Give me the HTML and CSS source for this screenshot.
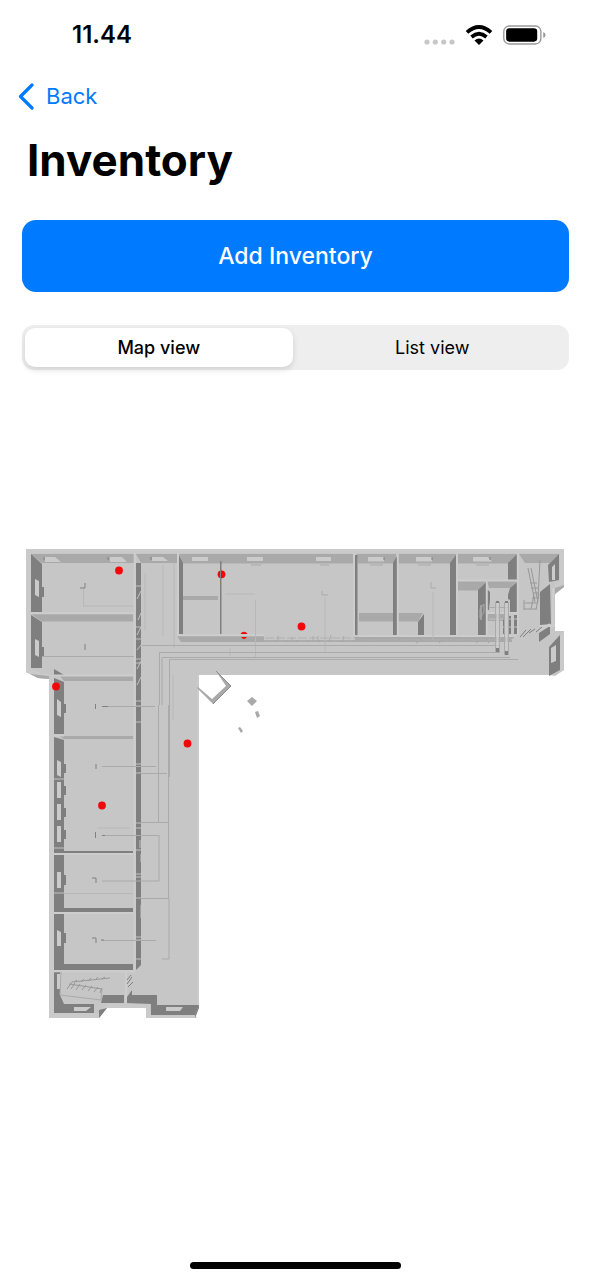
FILE: index.html
```html
<!DOCTYPE html>
<html lang="en">
<head>
<meta charset="utf-8">
<meta name="viewport" content="width=device-width, initial-scale=1">
<title>Inventory</title>
<link rel="stylesheet" href="styles.css">
</head>
<body>
<div class="screen">
  <header class="status">
    <time class="clock">11.44</time>
    <div class="indicators">
      <svg class="signal" viewBox="0 0 31 6" aria-hidden="true"><circle cx="3" cy="3" r="2.6"/><circle cx="11.3" cy="3" r="2.6"/><circle cx="19.7" cy="3" r="2.6"/><circle cx="28" cy="3" r="2.6"/></svg>
      <svg class="wifi" viewBox="0 0 28 20" aria-hidden="true">
        <path d="M2 7.4Q14-3.2 26 7.4M6.5 12Q14 5.6 21.5 12" fill="none" stroke="#000" stroke-width="3.8"/>
        <path d="M9.5 15.4Q14 11.7 18.5 15.4L14 20Z"/>
      </svg>
      <svg class="battery" viewBox="0 0 44 20" aria-hidden="true">
        <rect x=".8" y=".8" width="38" height="18.4" rx="5.6" fill="none" stroke="#999" stroke-width="1.4"/>
        <rect x="3.2" y="3.2" width="31.8" height="13.6" rx="3.4"/>
        <path d="M41.2 7Q43.6 8 43.6 10T41.2 13Z" fill="#999"/>
      </svg>
    </div>
  </header>
  <nav class="nav">
    <a class="back" href="#">
      <svg class="chevron" viewBox="0 0 16 27" aria-hidden="true"><path d="M14 2 2.5 13.5 14 25" fill="none" stroke="currentColor" stroke-width="3.2" stroke-linecap="round" stroke-linejoin="round"/></svg>
      <span>Back</span>
    </a>
  </nav>
  <main class="content">
    <h1 class="title">Inventory</h1>
    <button class="add" type="button">Add Inventory</button>
    <div class="segments" role="radiogroup" aria-label="View">
      <label class="segment"><input class="choice" type="radio" name="view" checked><span class="segment-text">Map view</span></label>
      <label class="segment"><input class="choice" type="radio" name="view"><span class="segment-text">List view</span></label>
    </div>
    <svg class="map" viewBox="22 540 547 486" role="img" aria-label="Floor plan with inventory locations">
      <path class="floor" d="M26 549H564V587L555 594V631H564V670L555 676 549 675H199V1007L195 1018H146V1008H107L99 1018H49V679L38 678 26 672Z"/>
      <!-- outer wall tops -->
      <path class="rim" d="M26 549H564V553H31V668L42 674H49V679L38 678 26 672ZM49 675H54V1013H99L107 1004H150V1013H194L197 1018H146V1008H107L99 1018H49ZM560 553H564V587L555 588V584L560 580ZM560 635 564 631V670L560 672ZM197 675H199V1006L197 1006Z"/>
      <!-- far wall faces and horizontal partitions -->
      <g class="face">
        <path d="M31 554H134V563H42ZM136 554H178V563H141ZM179 554H353V563.5H183ZM357 554H396V563.5H358ZM398 554H456V563.5H398ZM457 554H517L508 563.5H457ZM519 554H559L550 563H525Z"/>
        <path d="M31 614H133V621.5H42ZM182 596H218V600H183ZM177 636H264V642H181ZM264 640H512V642H264ZM355 637H515L508 642H355ZM359 613H396V621.5H359ZM398 613H423L418 621.5H398ZM457 581H486L478 590.5H457ZM487 581H517L510 588H489ZM487 614H505V621H487Z"/>
        <path d="M60 676H133V681H64ZM59 736H133V739H64Z"/>
        <path d="M555 588 564 585V587L555 594ZM30 674 49 676V679L38 678Z"/>
      </g>
      <!-- shaded side faces -->
      <g class="shade">
        <path d="M31 554 42 564V612H31ZM31 615 42 622V668H31ZM136 563H141V965L136 970ZM179 555 183 563V634H179ZM220 561H221.5V634H220ZM355 555H357.5V635H355ZM393 563 397 556V635H393ZM418 622 424 614V635H418ZM450 563 456 555V635H450ZM478 590 486 582V635H478ZM508 563 517 554V580H508ZM510 588 517 582V612H510V600L508 599V595ZM487 589 490 592V600L489 610H487Z"/>
        <path d="M548 565 559 554V580L549 582ZM540 592 550 584 551 624 540 625ZM539 633 550 626V634L539 642ZM549 647 560 635V670L549 676Z"/>
        <path d="M54 669 64 675H54ZM54 678 64 682V734H54ZM54 737 64 740V851H133V853H54ZM54 855H64V908H133V912H54ZM54 914H64V964H133V970H54ZM54 972H60V995L64 1004H94V1013H54ZM103 995H124V1003H101ZM127 1003V997L132 990V995H157V1005H199L195 1015H151V1004Z"/>
        <path d="M195 1015 199 1005V1008L195 1018ZM99 1018V1010L107 1008ZM42 587H44V597H42ZM42 647H44V657H42ZM64 704H66V713H64ZM64 764H66V773H64ZM64 786H66V795H64ZM64 808H66V817H64ZM64 830H66V839H64ZM64 875H66V885H64ZM64 933H66V943H64Z"/>
      </g>
      <!-- wall crests -->
      <path class="crest" d="M134.7 553V970M178 553V635M354 553V636M397.8 554V636M457 554V636M517.8 553V635M486.8 582V635M54 735.5H64M54 853.9H133M54 913H133M54 971.2H135M126 971V1004M31 613.2H134M458 580.5H517M487 613H517M54 675.5H134M177 635.3H264M358 636H516M540 626H553V588M539 631 550 624"/>
      <!-- windows -->
      <path class="pane" d="M45 557H55L61 562H45ZM110 557H122L127 562H110ZM152 557H163L168 561H152ZM192 557H208V561H192ZM247 557H263V561H247ZM316 557H331V561H316ZM368 557H384V561.500H368ZM416 557H432V561.500H416ZM473 557H488L492 561.500H473ZM35 579 39 581V597L35 595ZM35 639 39 641V657L35 655ZM57 699 61 702V717L57 715ZM57 760 61 762V777L57 775ZM57 782H61V798H57ZM57 804H61V820H57ZM57 826H61V842H57ZM57 872H61V888H57ZM57 930 61 932V946H57ZM57 974H60V989H57ZM74 1007H91L86 1011H74ZM166 1007H183L180 1011H166ZM552 567 555 564V580H552ZM551 648 556 645V661L551 663Z"/>
      <path class="dark-line" d="M44 557V560M108 557V560M151 557V560M384 557V560M432 557V560M490 557V560"/>
      <path class="soft-line" d="M251 565H261M320 565H329M370 565H383M418 565H431M476 565H489"/>
      <!-- breaks and doors along the corridor wall -->
      <path class="break" d="M136 586H141M136 627H141M136 639H141M136 659H141M136 663H141M136 701H141M136 706H141M136 722H141M136 764H141M136 773H141M136 823H141M136 828H141M136 850H141M136 874H141M136 877H141M136 898H141M136 937H141M136 940H141M136 959H141M54 779H64M54 848H64M54 893H64"/>
      <path class="break" d="M137 599 141 591M138 620 141 613M137 635 141 627M137 650 141 645M137 669 141 661M137 685 141 677M140 840V848M141 854V862M141 905V918"/>
      <!-- pipes and ducts -->
      <path class="faint-line" d="M83.500 588V606H133M163 565V636M174 563V648M225 594H255M255.500 600V658M230 648V656M325 598V652M433 592V640M145 573V630M97 828H130M173 675V720M64 893.500H133"/>
      <path class="soft-line" d="M42 656.500H134M142 645.500H500M159.500 705V652.500H500M169.500 777V659.500H518M162 705V657.500H510"/>
      <path class="soft-line" d="M102 706.500H155M102 766.500H156M102 835.500H159M102 881H159V835M102 940.500H156M141 822.500H168M141 898.500H169V959H162M141 773.500H167M158.500 705V823M168.500 705V898"/>
      <path class="dark-line" d="M85 583V588H80M85 644V650M95.500 704V709M96 764V769M95.500 832V838M92 878H96V883M92 938H96V943M102 706.500H108M102 835.500H105M101 940H104"/>
      <path class="soft-line" d="M322 591V595H328M431 582V588H436"/>
      <path class="dotted" d="M265 638H355M265 641H355M356 640H500"/>
      <path class="soft-line" d="M278 636V642M292 637V642M313 636V642M318 636V642M331 635 329 642M344 636 342 642M420 641 416 643M443 640 439 643M480 640 476 643M492 640 488 643"/>
      <!-- stair rooms -->
      <path class="stair" d="M528 568 535 602M531 568 538 602M540 560 538 598M534 595 531 609M539 594 536 610M530 583 537 583M531 588 538 588M533 593 539 593M532 598H539M525 603H537M524 609H536M524 600V610"/>
      <path class="dark-line" d="M520 637 526 630M523 637 531 629M529 633 535 629M536 632 542 627"/>
      <path class="shade" d="M503 618H505V634H503ZM508 616H511V634H508ZM514 615H517V634H514Z"/>
      <path class="break" d="M489 619H517M489 627H517M489 606H510M481 605V620"/>
      <path class="soft-line" d="M495.500 602V652M499.500 602V652M504.500 602V655M508.500 602V655M489 607.500H508"/>
      <path class="duct" d="M497.500 602V651M506.500 602V654"/>
      <path class="dark-fill" d="M496 601H499V603H496ZM505 601H508V603H505ZM496 648H499V652H496ZM505 651H508V655H505Z"/>
      <path class="soft-line" d="M480 618V609L484 604V612L480 618"/>
      <path class="room" d="M61 971 60 995 101 999 102 988 70 982Z"/>
      <path class="soft-line" d="M61 972 60 995 101 1000 102 989"/>
      <path class="stair" d="M69 984 102 989M72 982 110 978M67 989 72 982M71 989 75 983M76 990 80 984M82 990 86 985M88 991 92 986M94 992 98 987M100 993 102 988M74 982 77 980M81 982 84 979M88 981 91 978M95 980 98 977M102 979 105 977"/>
      <path class="dark-line" d="M127 984 132 977M127 980 131 975M128 987 133 982"/>
      <!-- loose objects outside the building -->
      <path class="white" d="M199 675H218L226 686 213 699 199 687Z"/>
      <path class="face" d="M216 671 231 686 213 704 197 688 198 687 212 699 226 686Z"/>
      <path class="edge" d="M216 671 231 686 213 704"/>
      <path class="face" d="M247 701 252 697 257 701 252 706ZM255 712 258 711 260 716 257 718ZM238 728 240 727 243 731 241 733Z"/>
      <g class="pins">
        <circle cx="119" cy="570.5" r="3.9"/><circle cx="221.5" cy="574.3" r="3.9"/><circle cx="301.5" cy="626.5" r="3.9"/><path d="M240.500 634A3.900 3.900 0 0 1 247.500 634ZM241 637H247Q244 641 241 637Z"/><circle cx="56" cy="686.5" r="3.9"/><circle cx="187.500" cy="743.500" r="3.900"/><circle cx="102" cy="805.5" r="3.900"/>
      </g>
      <path class="dark-line" d="M220.500 570V579"/>
    </svg>
  </main>
  <footer class="home"><div class="home-bar"></div></footer>
</div>
</body>
</html>
```
FILE: styles.css
```css
* { box-sizing: border-box; }
body { margin: 0; background: #fff; color: #000; font-family: Inter, "Liberation Sans", sans-serif; }
.screen { display: flex; flex-direction: column; min-height: 100vh; }
.status { display: flex; align-items: center; justify-content: space-between; height: 70px; padding: 0 45px 0 72px; }
.clock { font-size: 24px; font-weight: 600; line-height: 28px; }
.indicators { display: flex; align-items: center; gap: 10px; }
.signal { width: 31px; height: 6px; margin-top: 14px; fill: #c7c7c7; }
.wifi { width: 28px; height: 20px; }
.battery { width: 43px; height: 20px; }
.nav { display: flex; padding: 10px 18px; }
.back { display: flex; align-items: center; gap: 12px; color: #007aff; font-size: 22px; line-height: 32px; text-decoration: none; }
.chevron { width: 16px; height: 27px; }
.content { display: flex; flex-direction: column; padding: 0 22px; }
.title { margin: 8px 0 30px; padding-left: 5px; font-size: 44px; font-weight: 700; line-height: 60px; }
.add { height: 72px; border: 0; border-radius: 14px; background: #007aff; color: #fff; font: 500 23px/28px Inter, "Liberation Sans", sans-serif; }
.segments { display: grid; grid-template-columns: 1fr 1fr; gap: 6px; margin-top: 33px; padding: 3px; border-radius: 12px; background: #eee; }
.segment { display: grid; }
.choice { grid-area: 1 / 1; width: 100%; height: 100%; margin: 0; appearance: none; border-radius: 10px; }
.choice:checked { background: #fff; box-shadow: 0 3px 6px rgba(0, 0, 0, .12); }
.segment-text { grid-area: 1 / 1; z-index: 1; padding: 8px 0 7px; font-size: 18px; line-height: 24px; text-align: center; }
.choice:checked + .segment-text { font-weight: 500; }
.map { width: 100%; margin-top: 170px; }
.floor, .room { fill: #c6c6c6; }
.rim { fill: #cacaca; }
.face { fill: #a9a9a9; }
.shade, .dark-fill { fill: #7f7f7f; }
.pane { fill: #cbcbcb; }
.white { fill: #fff; }
.crest { fill: none; stroke: #cdcdcd; stroke-width: 2; }
.break { fill: none; stroke: #c3c3c3; stroke-width: 1; }
.duct { fill: none; stroke: #ccc; stroke-width: 2; }
.soft-line { fill: none; stroke: #aaa; stroke-width: 1; }
.faint-line { fill: none; stroke: #b8b8b8; stroke-width: 1; }
.dark-line { fill: none; stroke: #808080; stroke-width: 1; }
.stair { fill: none; stroke: #989898; stroke-width: 1; }
.edge { fill: none; stroke: #8c8c8c; stroke-width: 1; }
.dotted { fill: none; stroke: #b0b0b0; stroke-width: 1; stroke-dasharray: 9 2; }
.pins { fill: #f20808; }
.home { display: flex; justify-content: center; margin-top: auto; padding-bottom: 11px; }
.home-bar { width: 211px; height: 7px; border-radius: 4px; background: #000; }
```
